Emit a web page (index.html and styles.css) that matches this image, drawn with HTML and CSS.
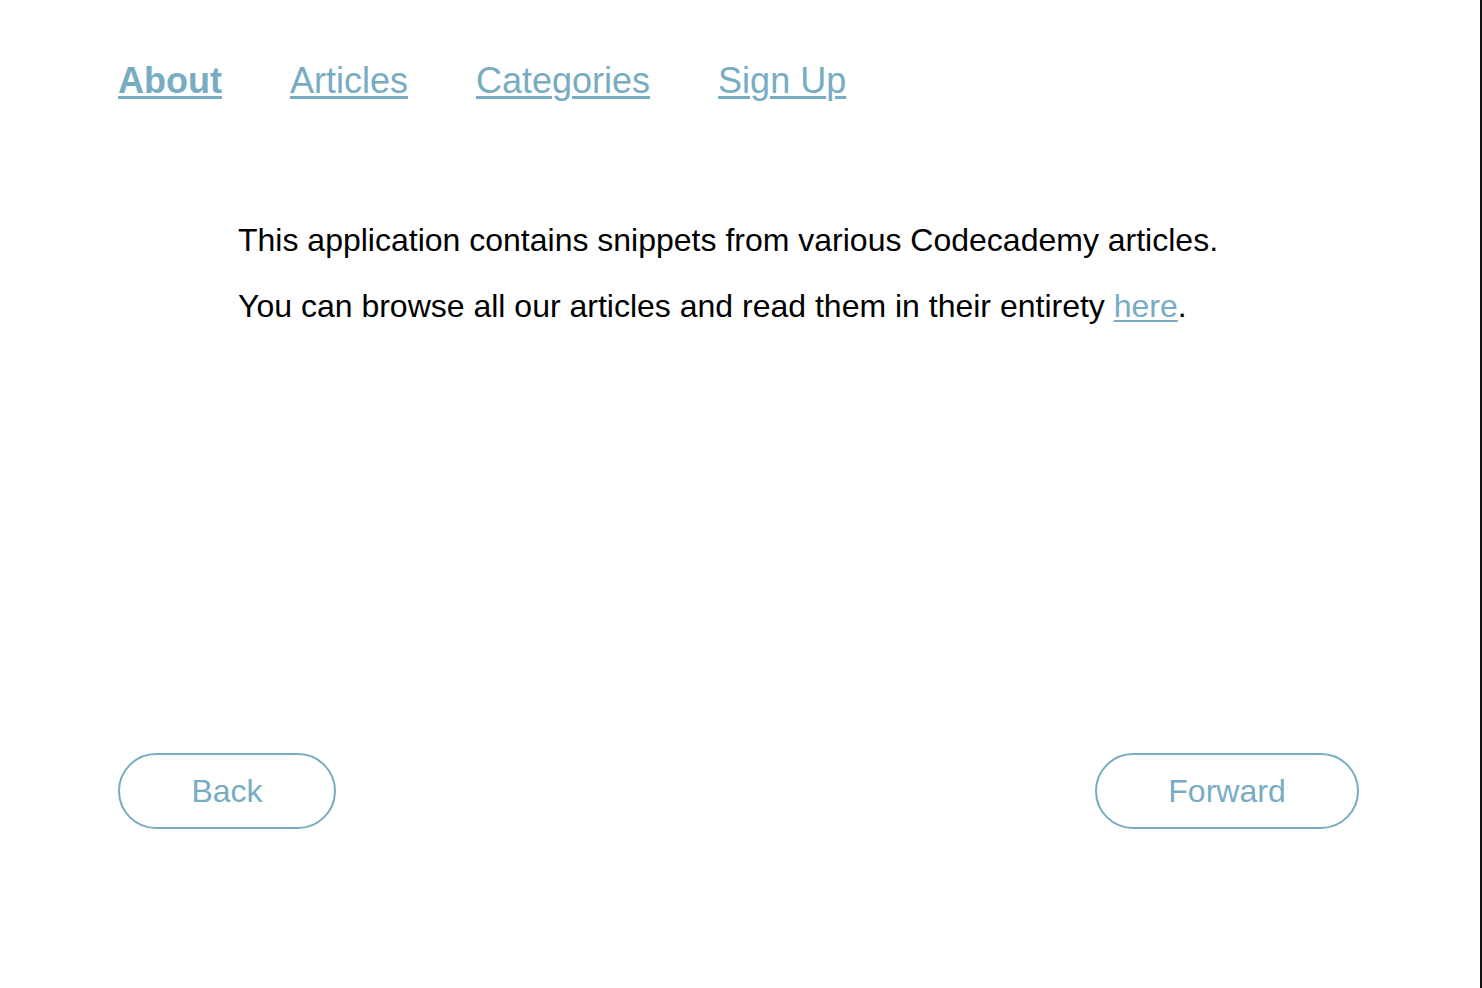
FILE: index.html
```html
<!DOCTYPE html>
<html>
<head>
<meta charset="utf-8">
<link rel="stylesheet" href="styles.css">
</head>
<body>
<div class="page">
  <nav class="nav">
    <a class="nav-link active" href="#">About</a>
    <a class="nav-link" href="#">Articles</a>
    <a class="nav-link" href="#">Categories</a>
    <a class="nav-link" href="#">Sign Up</a>
  </nav>
  <main class="content">
    <p class="text">This application contains snippets from various Codecademy articles.</p>
    <p class="text">You can browse all our articles and read them in their entirety <a class="inline-link" href="#">here</a>.</p>
  </main>
  <div class="controls">
    <button class="btn btn-back">Back</button>
    <button class="btn btn-forward">Forward</button>
  </div>
</div>
</body>
</html>
```
FILE: styles.css
```css
html, body {
  margin: 0;
  padding: 0;
  background: #fff;
}
body {
  font-family: "Liberation Sans", Arial, Helvetica, sans-serif;
  color: #000;
}
.page {
  box-sizing: border-box;
  width: 1482px;
  height: 988px;
  border-right: 2px solid #111;
  padding: 0 121px 0 118px;
  display: flex;
  flex-direction: column;
}
.nav {
  display: flex;
  gap: 68px;
  padding-top: 60px;
  height: 44px;
}
.nav-link {
  font-size: 36px;
  line-height: 42px;
  color: #78acc3;
  text-decoration: underline;
  text-decoration-thickness: 3px;
  text-underline-offset: 3px;
}
.nav-link.active {
  font-weight: bold;
}
.content {
  padding: 118px 0 0 120px;
  display: flex;
  flex-direction: column;
  gap: 29px;
}
.text {
  margin: 0;
  font-size: 32px;
  line-height: 37px;
}
.inline-link {
  color: #78acc3;
  text-decoration-thickness: 2px;
  text-underline-offset: 3px;
}
.controls {
  margin-top: auto;
  margin-bottom: 159px;
  display: flex;
  justify-content: space-between;
}
.btn {
  box-sizing: border-box;
  height: 76px;
  border: 2px solid #78acc3;
  border-radius: 38px;
  background: #fff;
  color: #78acc3;
  font-family: "Liberation Sans", Arial, Helvetica, sans-serif;
  font-size: 32px;
  padding: 0;
}
.btn-back {
  width: 218px;
}
.btn-forward {
  width: 264px;
}
```
